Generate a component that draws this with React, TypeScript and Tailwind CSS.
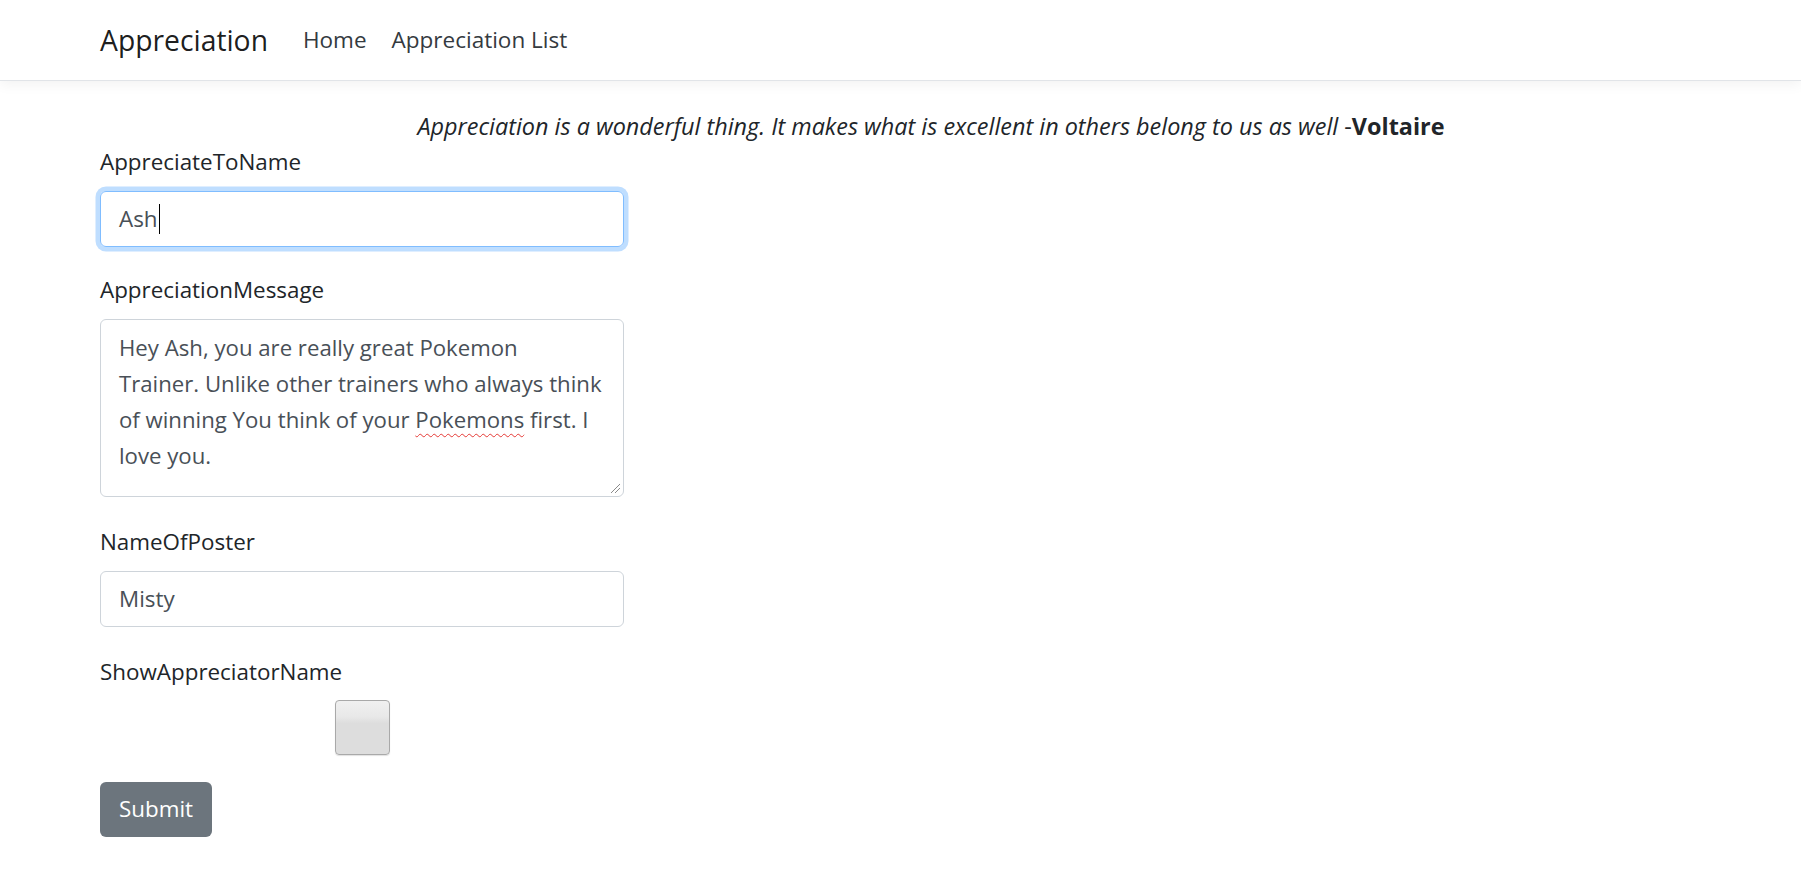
import React from "react";

function Label({ children }: { children: React.ReactNode }) {
  return <div className="h-[34px] leading-[34px] mb-[12px] text-[#212529] whitespace-nowrap">{children}</div>;
}

export default function App() {
  return (
    <div className="min-h-screen bg-white font-['Open_Sans',sans-serif] text-[22.4px] text-[#212529]">
      <header className="h-[81px] border-b border-[#e1e4e8] shadow-[0_4px_12px_rgba(0,0,0,0.05)] flex items-center pl-[100px]">
        <span className="text-[28.3px] text-[rgba(0,0,0,0.9)] leading-none whitespace-nowrap">Appreciation</span>
        <nav className="flex items-center ml-[35px] gap-[25px] text-[22.5px] text-[#343a40] whitespace-nowrap">
          <span>Home</span>
          <span>Appreciation List</span>
        </nav>
      </header>

      <main className="pl-[100px] pr-[39px] pt-[28px]">
        <p className="h-[34px] leading-[34px] text-center whitespace-nowrap text-[23.4px]">
          <i>Appreciation is a wonderful thing. It makes what is excellent in others belong to us as well</i> -<b>Voltaire</b>
        </p>

        <div className="w-[524px] mt-[2px]">
          <Label>AppreciateToName</Label>
          <div className="h-[56px] rounded-[6px] border border-[#80bdff] shadow-[0_0_0_4.5px_rgba(0,123,255,0.25)] flex items-center pl-[18px] text-[#495057]">
            <span>Ash</span>
            <span className="w-px h-[30px] bg-black ml-px" />
          </div>

          <div className="h-[26px]" />
          <Label>AppreciationMessage</Label>
          <div className="relative h-[178px] rounded-[6px] border border-[#ced4da] pl-[18px] pt-[10px] text-[#495057] text-[22.2px] leading-[36px] whitespace-nowrap">
            <div>Hey Ash, you are really great Pokemon</div>
            <div>Trainer. Unlike other trainers who always think</div>
            <div>
              of winning You think of your{" "}
              <span className="underline decoration-wavy decoration-[#e53935] decoration-[1px] underline-offset-[5px]">Pokemons</span> first. I
            </div>
            <div>love you.</div>
            <svg className="absolute right-[2px] bottom-[2px]" width="11" height="11" viewBox="0 0 11 11">
              <line x1="1" y1="10" x2="10" y2="1" stroke="#8a8a8a" strokeWidth="1" />
              <line x1="5" y1="10" x2="10" y2="5" stroke="#8a8a8a" strokeWidth="1" />
            </svg>
          </div>

          <div className="h-[28px]" />
          <Label>NameOfPoster</Label>
          <div className="h-[56px] rounded-[6px] border border-[#ced4da] flex items-center pl-[18px] text-[#495057]">
            Misty
          </div>

          <div className="h-[28px]" />
          <Label>ShowAppreciatorName</Label>
          <div className="h-[56px] -mt-[2px] mb-[2px] flex items-center justify-center">
            <div className="w-[55px] h-[55px] rounded-[4px] border border-[#a9a9a9] bg-[linear-gradient(to_bottom,#f0f0f0_0%,#e8e8e8_30%,#dddddd_42%,#dddddd_100%)] shadow-[0_1px_1px_rgba(0,0,0,0.12)]" />
          </div>

          <div className="h-[25px]" />
          <button className="h-[55px] w-[112px] rounded-[6px] bg-[#6c757d] text-white leading-none">Submit</button>
        </div>
      </main>
    </div>
  );
}
